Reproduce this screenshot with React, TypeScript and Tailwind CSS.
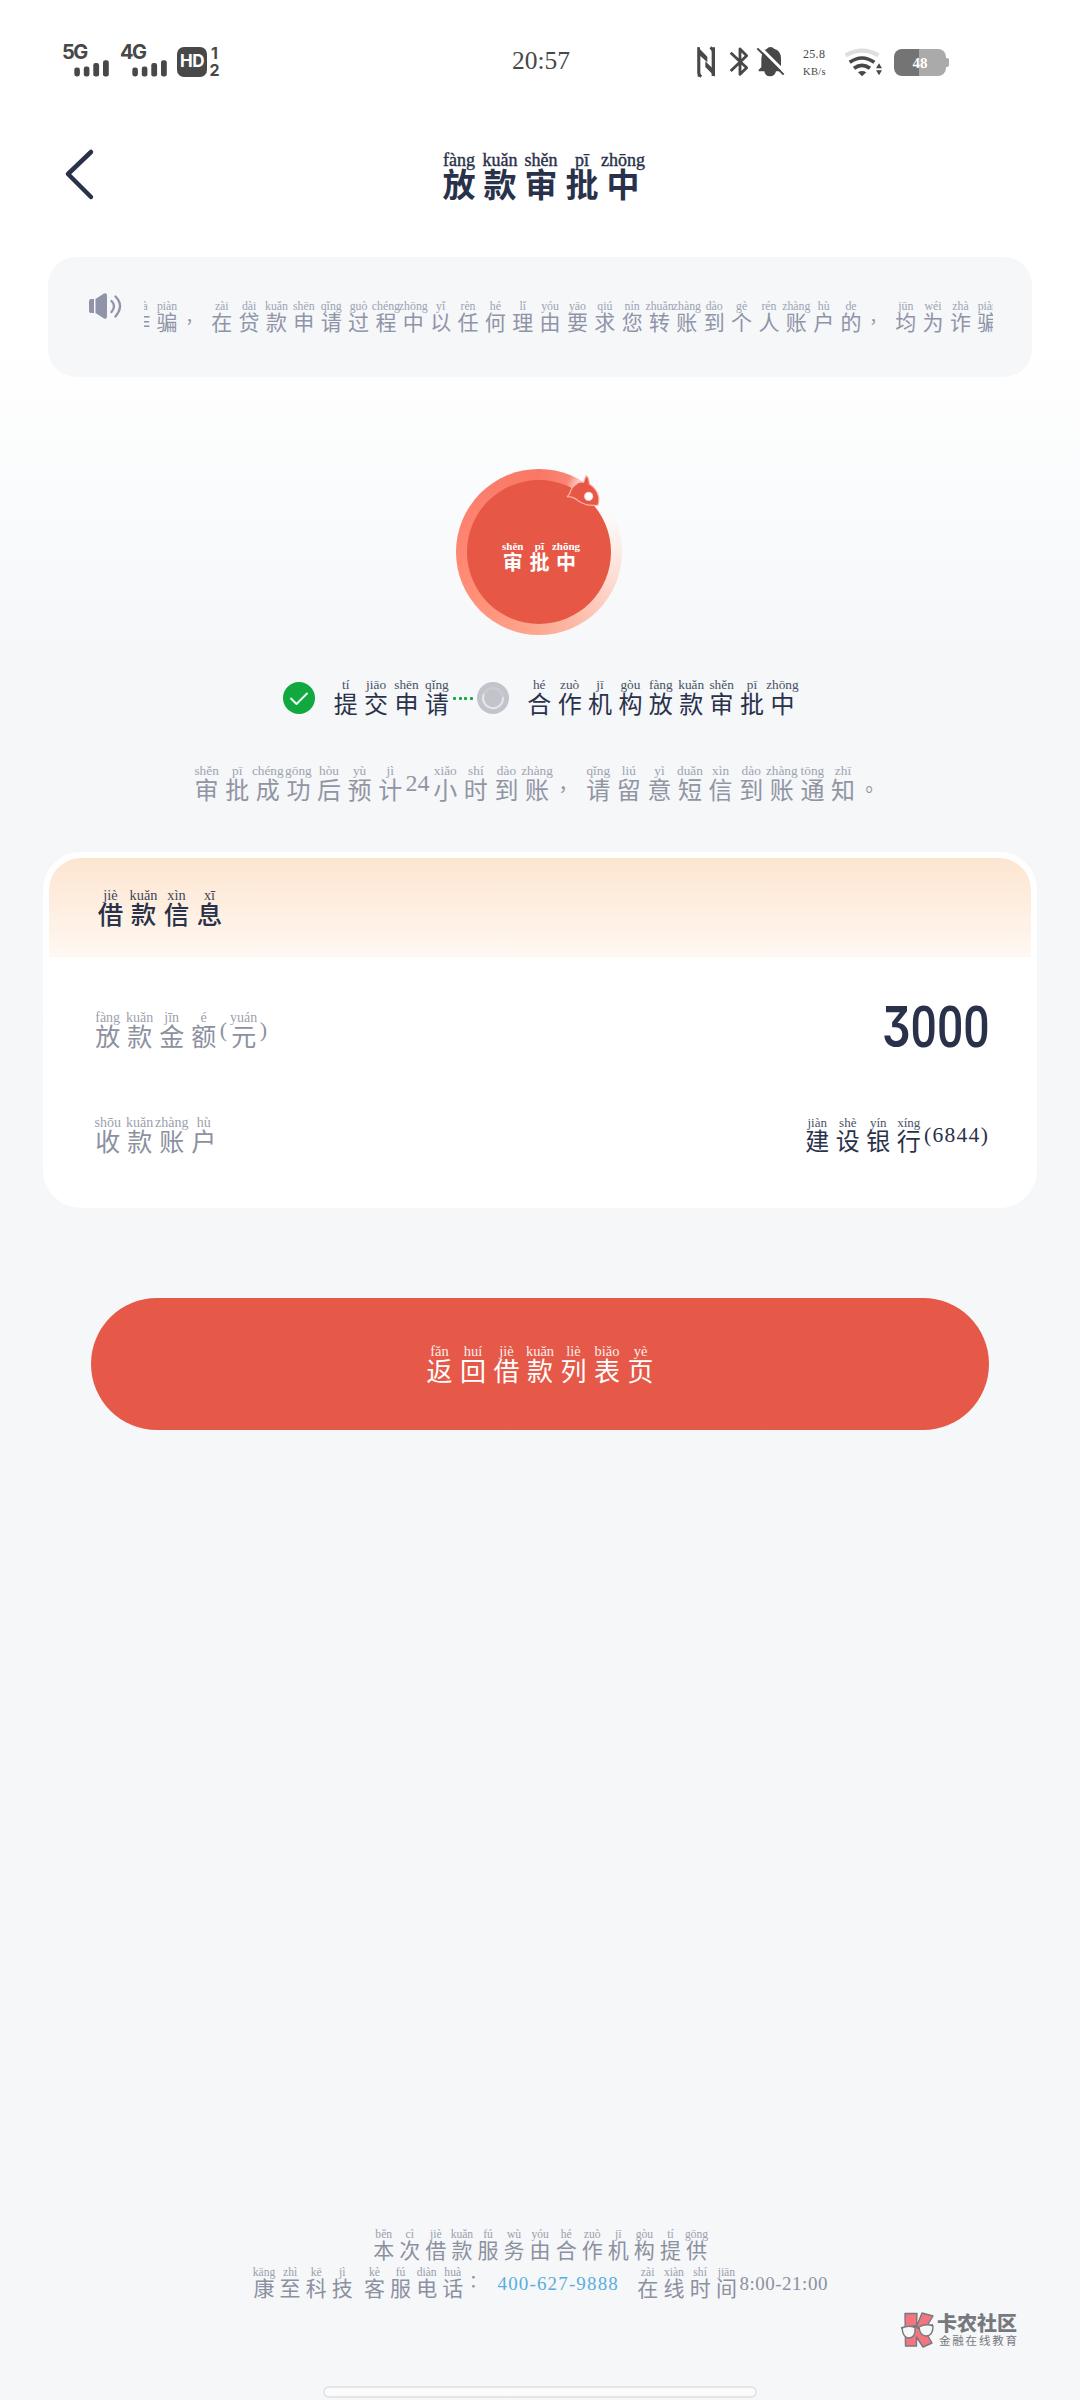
import React from "react";

type Pair = [string, string];

/** Splits "fàng放 kuǎn款" into [pinyin, character] pairs. */
const parse = (source: string): Pair[] =>
  source.split(" ").map((token) => {
    const chars = Array.from(token);
    return [chars.slice(0, -1).join(""), chars[chars.length - 1]] as Pair;
  });

/** A run of characters, each with its pinyin above; punctuation is set small and raised. */
function Pinyin({ text, cell, top, main, className = "" }: { text: string; cell: string; top: string; main: string; className?: string }) {
  return (
    <div className={`flex ${className}`}>
      {parse(text).map(([p, h], i) => (
        <div key={i} className={`flex shrink-0 flex-col items-center whitespace-nowrap ${cell}`}>
          <span className={`block font-['Liberation_Serif',serif] ${top}`}>{p}</span>
          {p ? (
            <span className={`block font-['Noto_Sans_CJK_SC',sans-serif] ${main}`}>{h}</span>
          ) : (
            <span className={`-ml-[10px] block font-['Noto_Sans_CJK_TC',sans-serif] ${main}`}>
              <span className="inline-block scale-80">{h}</span>
            </span>
          )}
        </div>
      ))}
    </div>
  );
}

function Signal({ label }: { label: string }) {
  return (
    <div className="h-[32px] w-[47px]">
      <div className="h-[15px] font-['Inter',sans-serif] text-[20px] leading-[14px] font-bold tracking-[-1.5px]">{label}</div>
      <svg className="ml-[12px]" width="35" height="17" viewBox="0 0 35 17" fill="currentColor">
        <rect x="0.3" y="7.5" width="5.6" height="9" rx="2.4" />
        <rect x="9.8" y="6.5" width="5.6" height="10" rx="2.2" />
        <rect x="19.3" y="3" width="5.8" height="13.5" rx="2.2" />
        <rect x="29" y="0.3" width="5.8" height="16.2" rx="2.2" />
      </svg>
    </div>
  );
}

function StatusBar() {
  return (
    <div className="flex h-[100px] items-start pt-[45px] text-[#484848]">
      <div className="ml-[62px] w-[58px]"><Signal label="5G" /></div>
      <div className="w-[57px]"><Signal label="4G" /></div>
      <div className="mt-[2px] flex h-[30px] w-[30px] items-center justify-center rounded-[7px] bg-[#484848] font-['Inter',sans-serif] text-[17px] font-bold tracking-[-0.5px] text-white">HD</div>
      <div className="ml-px flex w-[13px] flex-col items-center font-['Inter',sans-serif] text-[16px] leading-[17px] font-bold">
        <span className="h-[17px]">1</span>
        <span className="h-[17px]">2</span>
      </div>
      <div className="mt-[3px] ml-[291px] w-[75px] font-['Liberation_Serif',serif] text-[25.5px] leading-[26px] font-medium">20:57</div>
      <svg className="ml-[109px]" width="92" height="34" viewBox="48 45 276 102" fill="none" stroke="#484848">
        <path d="M56 52v75q0 8 8 13M99 138V66q0-8-8-14" strokeWidth="8" />
        <path d="M53 50l29 30v17L61 78v62h-8zM105 140L76 111V94l20 19V52h9z" fill="#484848" stroke="none" />
        <path d="M152 68l48 45-20 20V57l20 20-48 46" strokeWidth="8.5" strokeLinejoin="round" />
        <path d="M236 124V119l8-7V88q1-24 17-32 3-5 10-5 9 0 11 5 21 6 21 29v39h-15q-3 15-18 15t-17-15z" fill="#484848" stroke="none" />
        <path d="M236 48l82 82" strokeWidth="9" stroke="#fff" />
        <path d="M232 55l79 79" strokeWidth="6" />
      </svg>
      <div className="mt-px ml-[15px] w-[34px] font-['Liberation_Serif',serif] text-[12px] leading-[17px] tracking-[0.3px]">
        <div>25.8</div>
        <div className="text-[10.5px]">KB/s</div>
      </div>
      <svg className="mt-[3px] ml-[8px]" width="38" height="30" viewBox="492 54 114 90" fill="none" strokeWidth="11">
        <path d="M494 76q49-28 98 0" stroke="#dedede" strokeWidth="13" />
        <path d="M506 97q37-26 74 0M519 115q24-18 48 0" stroke="#484848" />
        <path d="M531 127q12-8 25 0l-13 12zM585 115l9-15 9 15zM585 121l9 15 9-15z" fill="#484848" />
      </svg>
      <div className="mt-[4px] ml-[11px] flex h-[27px] w-[52px] items-center justify-center rounded-[8px] bg-linear-to-r from-[#747474] from-48% to-[#aaaaaa] to-48% pt-px font-['Liberation_Serif',serif] text-[15px] font-bold text-white">48</div>
      <div className="mt-[13px] h-[9px] w-[3px] rounded-r-[2px] bg-[#aaaaaa]" />
    </div>
  );
}

function Badge() {
  return (
    <div className="relative mx-auto mt-[92px] h-[166px] w-[166px] rounded-full bg-[conic-gradient(#f97765_0deg,#fa8575_22deg,#fff4f1_34deg,#fbfcfd_48deg,#fbf9f9_65deg,#fdeae4_90deg,#fdd0c4_125deg,#fcb8a4_155deg,#fda68d_185deg,#ff937a_225deg,#ff8672_270deg,#fb7f6d_315deg,#f97765_360deg)]">
      <div className="absolute top-[11px] left-[11px] h-[144px] w-[144px] rounded-full bg-[#e65746] pt-[61px] text-white">
        <Pinyin
          className="ml-[33px]"
          text="shěn审 pī批 zhōng中"
          cell="w-[26.6px]"
          top="h-[11px] text-[11px] leading-[11px] font-bold"
          main="mt-[-0.5px] text-[20px] leading-[20px] font-bold"
        />
      </div>
      <svg className="absolute top-[6px] left-[110px]" width="36" height="36" viewBox="382 64 108 108">
        <path d="M386 129q8-7 11-20 7-15 27-24 6 0 11 1l7-20q9 4 10 25 22 14 28 38 2 15-2 25-34 5-60-13-13-12-32-12z" fill="#e65746" stroke="#ffb3a6" strokeWidth="3.5" strokeLinejoin="round" />
        <circle cx="450" cy="128" r="13" fill="#fff" stroke="#f9b7ae" strokeWidth="2" />
      </svg>
    </div>
  );
}

const stepCell = "w-[30.4px]";
const stepTop = "h-[13px] text-[13.3px] leading-[14px] opacity-85";
const stepMain = "mt-[-0.5px] text-[24px] leading-[24px]";
const tipTop = "h-[13px] text-[13.3px] leading-[13px] opacity-85";
const rowTop = "h-[14px] text-[14px] leading-[15px] opacity-85";
const rowMain = "-mt-px text-[25px] leading-[25px]";
const footTop = "h-[12px] text-[11.6px] leading-[14px] opacity-85";
const footMain = "-mt-px text-[21px] leading-[21px]";

export default function App() {
  return (
    <div className="flex h-[2400px] w-[1080px] flex-col overflow-hidden bg-linear-to-b from-white from-[340px] to-[#f5f7f9] to-[660px]">
      <StatusBar />

      <header className="flex h-[157px] items-start text-[#29324a]">
        <svg className="mt-[48px] ml-[64px]" width="32" height="54" viewBox="0 0 32 54" fill="none" stroke="currentColor" strokeWidth="4.5" strokeLinecap="round" strokeLinejoin="round">
          <path d="M27 4L4 26 27 49" />
        </svg>
        <Pinyin
          className="mt-[51px] ml-[342.500px]"
          text="fàng放 kuǎn款 shěn审 pī批 zhōng中"
          cell="w-[41px]"
          top="h-[19px] text-[18px] leading-[19px] [-webkit-text-stroke:0.4px_#29324a]"
          main="-mt-[3px] text-[33px] leading-[33px] font-bold"
        />
      </header>

      <section className="mx-[48px] flex h-[120px] shrink-0 rounded-[28px] bg-[#f5f7f9] text-[#8f94a8]">
        <svg className="mt-[35px] ml-[40px] shrink-0" width="34" height="28" viewBox="0 0 34 28" fill="none">
          <path d="M3 7h3v14H3q-2 0-2-2V9q0-2 2-2zM7.500 7l8.500-5.500q3-1 3 2v21q0 3-3 2L7.500 21z" fill="currentColor" />
          <path d="M23.5 9q5 5 0 11M27.5 4.500q9 9 0 20" stroke="currentColor" strokeWidth="2.3" strokeLinecap="round" />
        </svg>
        <div className="mt-[43px] ml-[22px] h-[40px] w-[849px] overflow-hidden">
          <Pinyin
            className="-ml-[18px]"
            text="zhà诈 piàn骗 ， zài在 dài贷 kuǎn款 shēn申 qǐng请 guò过 chéng程 zhōng中 yǐ以 rèn任 hé何 lǐ理 yóu由 yāo要 qiú求 nín您 zhuǎn转 zhàng账 dào到 gè个 rén人 zhàng账 hù户 de的 ， jūn均 wéi为 zhà诈 piàn骗"
            cell="w-[27.37px]"
            top="h-[12px] text-[11.8px] leading-[12px] opacity-85"
            main="-mt-px text-[21px] leading-[21px]"
          />
        </div>
      </section>

      <div className="flex w-[1077px] shrink-0 flex-col">
        <Badge />
      </div>

      <div className="mt-[43px] flex h-[38px] shrink-0 text-[#29324a]">
        <svg className="mt-[4px] ml-[283px]" width="32" height="32" viewBox="0 0 32 32" fill="none">
          <circle cx="16" cy="16" r="16" fill="#10a83f" />
          <path d="M8 16.500l5.500 5.500L24 11.500" stroke="#eafff0" strokeWidth="2" strokeLinecap="round" strokeLinejoin="round" />
        </svg>
        <Pinyin className="ml-[15.500px]" text="tí提 jiāo交 shēn申 qǐng请" cell={stepCell} top={stepTop} main={stepMain} />
        <div className="mt-[19px] ml-[1px] flex w-[24px] gap-[2.600px]">
          {[0, 1, 2, 3].map((n) => (
            <span key={n} className="h-[3px] w-[3px] rounded-[1px] bg-[#10a83f]" />
          ))}
        </div>
        <svg className="mt-[4px] shrink-0" width="32" height="32" viewBox="0 0 32 32" fill="none">
          <circle cx="16" cy="16" r="16" fill="#c2c3cb" />
          <circle cx="16" cy="16" r="10" stroke="#cbccd3" strokeWidth="2" />
          <path d="M6.500 13A10 10 0 1 0 26 16" stroke="#e6e7ea" strokeWidth="2" strokeLinecap="round" />
        </svg>
        <Pinyin className="ml-[15px]" text="hé合 zuò作 jī机 gòu构 fàng放 kuǎn款 shěn审 pī批 zhōng中" cell={stepCell} top={stepTop} main={stepMain} />
      </div>

      <div className="mt-[48px] ml-[191.300px] flex h-[38px] shrink-0 text-[#9195a3]">
        <Pinyin text="shěn审 pī批 chéng成 gōng功 hòu后 yù预 jì计" cell="w-[30.6px]" top={tipTop} main={stepMain} />
        <span className="mt-[7px] w-[24.500px] font-['Liberation_Serif',serif] text-[24px] leading-[24px]">24</span>
        <Pinyin text="xiǎo小 shí时 dào到 zhàng账 ， qǐng请 liú留 yì意 duǎn短 xìn信 dào到 zhàng账 tōng通 zhī知 。" cell="w-[30.6px]" top={tipTop} main={stepMain} />
      </div>

      <section className="mx-[43px] mt-[50px] h-[356px] shrink-0 overflow-hidden rounded-[38px] border-[6px] border-white bg-white text-[#8c90a0]">
        <div className="h-[99px] rounded-t-[30px] bg-linear-to-b from-[#fde5d0] to-[#fff8f2] pt-[30px] text-[#29324a]">
          <Pinyin
            className="ml-[45px]"
            text="jiè借 kuǎn款 xìn信 xī息"
            cell="w-[33px]"
            top="h-[14px] text-[14.3px] leading-[14px] opacity-90"
            main="-mt-[2px] text-[25.5px] leading-[26px] font-medium"
          />
        </div>
        <div className="flex h-[105px] justify-between pt-[53px]">
          <div className="ml-[42.700px] flex">
            <Pinyin text="fàng放 kuǎn款 jīn金 é额" cell="w-[32px]" top={rowTop} main={rowMain} />
            <span className="mt-[8px] w-[8px] font-['Liberation_Serif',serif] text-[22px] leading-[24px]">(</span>
            <Pinyin text="yuán元" cell="w-[32px]" top={rowTop} main={rowMain} />
            <span className="mt-[8px] font-['Liberation_Serif',serif] text-[22px] leading-[24px]">)</span>
          </div>
          <div className="-mt-[13px] mr-[43px] flex h-[60px] w-[106px] origin-left scale-x-80 items-center whitespace-nowrap font-['Roboto',sans-serif] text-[58px] leading-[60px] font-medium text-[#29324a]">
            <span className="font-['Inter',sans-serif] text-[56px] font-semibold [font-feature-settings:'cv09']">3</span>
            <span>000</span>
          </div>
        </div>
        <div className="flex justify-between pt-[53px]">
          <Pinyin className="ml-[42.700px]" text="shōu收 kuǎn款 zhàng账 hù户" cell="w-[32px]" top={rowTop} main={rowMain} />
          <div className="mr-[42px] flex text-[#29324a]">
            <Pinyin text="jiàn建 shè设 yín银 xíng行" cell="w-[30.5px]" top="h-[14px] text-[13px] leading-[15px] opacity-85" main="-mt-px text-[24px] leading-[24px]" />
            <span className="mt-[8px] w-[65px] font-['Liberation_Serif',serif] text-[21.5px] leading-[24px] tracking-[1.300px]">(6844)</span>
          </div>
        </div>
      </section>

      <button className="mx-[91px] mt-[90px] flex h-[132px] shrink-0 justify-center rounded-full bg-[#e65848] pt-[46px] text-white">
        <Pinyin
          text="fǎn返 huí回 jiè借 kuǎn款 liè列 biǎo表 yè页"
          cell="w-[33.5px]"
          top="h-[15px] text-[14.500px] leading-[15px] opacity-90"
          main="-mt-[2px] text-[26px] leading-[26px]"
        />
      </button>

      <footer className="mt-[798px] flex flex-col text-[#8c90a0]">
        <Pinyin
          className="ml-[370.700px] h-[38px]"
          text="běn本 cì次 jiè借 kuǎn款 fú服 wù务 yóu由 hé合 zuò作 jī机 gòu构 tí提 gōng供"
          cell="w-[26.07px]"
          top={footTop}
          main={footMain}
        />
        <div className="ml-[251px] flex h-[46px]">
          <Pinyin className="w-[110.500px]" text="kāng康 zhì至 kē科 jì技" cell="w-[26.07px]" top={footTop} main={footMain} />
          <div className="flex w-[136px]">
            <Pinyin text="kè客 fú服 diàn电 huà话" cell="w-[26.07px]" top={footTop} main={footMain} />
            <Pinyin className="-mt-[6px]" text="：" cell="w-[26.07px]" top={footTop} main={footMain} />
          </div>
          <span className="mt-[8px] w-[137px] font-['Liberation_Serif',serif] text-[19px] leading-[20px] tracking-[1.150px] text-[#5aaedb]">400-627-9888</span>
          <Pinyin text="zài在 xiàn线 shí时 jiān间" cell="w-[26.25px]" top={footTop} main={footMain} />
          <span className="mt-[8px] font-['Liberation_Serif',serif] text-[19px] leading-[20px] tracking-[0.500px]">8:00-21:00</span>
        </div>
        <div className="ml-[900px] flex h-[36px] text-[#77797e]">
          <svg width="34" height="36" viewBox="0 0 34 36" strokeWidth="1.400" stroke="#77797e" strokeLinejoin="round">
            <path d="M5 1.500h12l-.5 13L22 1l11 3-8.500 14L32 31l-9 4-6.500-10v9H5.500z" fill="#f2757f" />
            <path d="M1 16l15-2 2 2 15-3" fill="none" strokeWidth="1.800" />
            <path d="M2 16q6-3 13-.5 1 10-6 10.500-6 0-7-10zM19 15q7-4 14-1 0 10-7 10-6 0-7-9z" fill="#f5f7f9" />
          </svg>
          <div className="ml-[3px] whitespace-nowrap font-['Noto_Sans_CJK_SC',sans-serif]">
            <div className="h-[22px] text-[20px] leading-[21px] font-black">卡农社区</div>
            <div className="ml-[2px] text-[11.500px] leading-[12px] tracking-[1.800px]">金融在线教育</div>
          </div>
        </div>
      </footer>
      <div className="mt-[38px] ml-[323px] h-[12px] w-[434px] shrink-0 rounded-full border-2 border-[#e4e5e7] bg-[#fbfbfc]" />
    </div>
  );
}
